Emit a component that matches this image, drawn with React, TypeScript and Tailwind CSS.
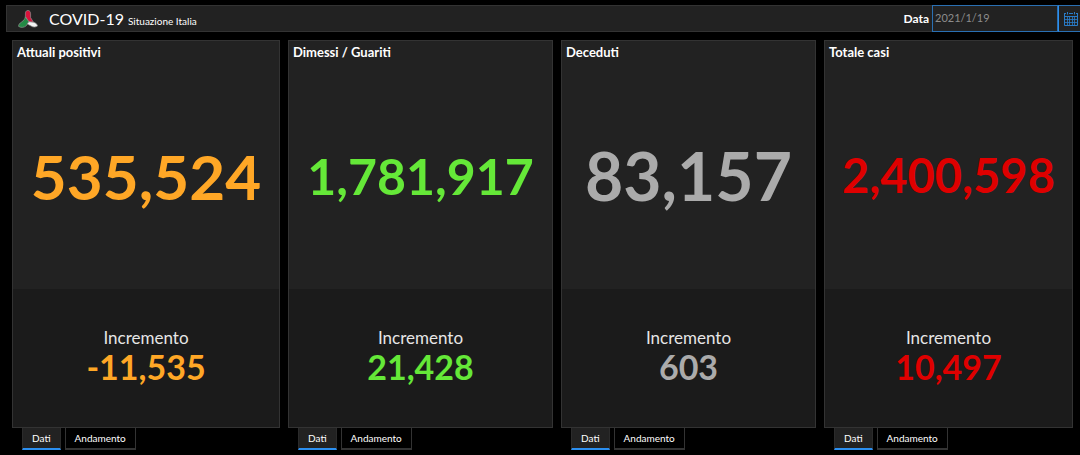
import { useState } from "react";

type Stat = {
  id: string;
  title: string;
  total: string;
  increment: string;
  color: string;
  size: string;
};

const stats: Stat[] = [
  { id: "positivi", title: "Attuali positivi", total: "535,524", increment: "-11,535", color: "text-[#ffa726]", size: "text-[62px]" },
  { id: "guariti", title: "Dimessi / Guariti", total: "1,781,917", increment: "21,428", color: "text-[#65e838]", size: "text-[50px]" },
  { id: "deceduti", title: "Deceduti", total: "83,157", increment: "603", color: "text-[#ababab]", size: "text-[66px]" },
  { id: "totale", title: "Totale casi", total: "2,400,598", increment: "10,497", color: "text-[#df0000]", size: "text-[47px]" },
];

const tabs = ["Dati", "Andamento"];

function Logo() {
  return (
    <svg viewBox="0 0 20 18" className="h-[18px] w-5" aria-hidden="true">
      <g stroke="#8f8f8f" strokeWidth="0.7" strokeLinejoin="round">
        <path d="M10 0.4C11.8 0.6 12.6 2 12.6 3.8V7.6L15.4 12.2L11 12L7.4 6.8V2.8C7.6 1.3 8.6 0.5 10 0.4Z" fill="#d9133c" />
        <path d="M7.4 6.8L10.8 11.8L8.4 15.6C6.5 17.6 3 18 0.6 16.4C0.5 14.6 1.6 13.2 3.6 12C5.6 10.6 6.8 9.4 7.4 6.8Z" fill="#238a45" />
        <path d="M10.8 11.8L15.4 12.2C17.6 12.8 19.2 14 19.5 16C17.6 17.4 15 17.3 13.2 16.1L9.4 14Z" fill="#f4f4f4" />
      </g>
    </svg>
  );
}

function CalendarIcon() {
  return (
    <svg viewBox="0 0 14 14" className="size-3.5 shrink-0" fill="none" stroke="#2a7cc7" aria-hidden="true">
      <path d="M0.5 1.5H2M5 1.5H9M12 1.5H13.5" />
      <path d="M3.5 0V2.5M10.5 0V2.5" />
      <path d="M0.5 1V13.5H13.5V1M0.5 4.5H13.5" />
      <path d="M3.5 5V13M5.5 5V13M8.5 5V13M10.5 5V13M1 7.5H13M1 10.5H13" strokeOpacity="0.8" />
    </svg>
  );
}

function StatCard({ stat }: { stat: Stat }) {
  const [active, setActive] = useState(tabs[0]);
  return (
    <section className="flex min-w-0 flex-col">
      <div className="flex flex-1 flex-col border border-[#333333]">
        <div className="flex flex-[248] flex-col bg-[#222222]">
          <h2 className="px-1 pt-px text-[13px] leading-5 font-bold text-white">{stat.title}</h2>
          <div className="flex flex-1 items-center justify-center">
            <span className={`leading-none font-bold ${stat.color} ${stat.size}`}>{stat.total}</span>
          </div>
        </div>
        <div className="flex flex-[138] flex-col items-center justify-center bg-[#1b1b1b]">
          <span className="text-[17px] leading-[22px] text-[#e6e6e6]">Incremento</span>
          <span className={`pb-1 text-[34px] leading-9 font-bold ${stat.color}`}>{stat.increment}</span>
        </div>
      </div>
      <div role="tablist" aria-label={stat.title} className="flex gap-1 pl-2.5">
        {tabs.map((tab) => (
          <button
            key={tab}
            type="button"
            role="tab"
            aria-selected={active === tab}
            onClick={() => setActive(tab)}
            className={
              active === tab
                ? "h-[22px] border-x border-b-2 border-x-[#2b2b2b] border-b-[#2b8ff0] bg-[#222222] px-[9px] text-[10px] leading-5 text-white"
                : "h-[22px] border-x border-b-2 border-[#333333] bg-black px-[9px] text-[10px] leading-5 text-white"
            }
          >
            {tab}
          </button>
        ))}
      </div>
    </section>
  );
}

export default function App() {
  const [date, setDate] = useState("2021/1/19");
  return (
    <div className="flex min-h-screen flex-col overflow-hidden bg-black pt-[5px] pb-[5px] font-['Lato','Liberation_Sans',sans-serif]">
      <header className="ml-1.5 flex h-[27px] items-stretch border-y border-l border-[#333333] bg-[#222222]">
        <div className="flex flex-1 items-center pl-[11px]">
          <Logo />
          <h1 className="flex items-baseline gap-1 pl-[11px] whitespace-nowrap">
            <span className="text-base leading-6 text-white">COVID-19</span>
            <span className="text-[10px] text-white">Situazione Italia</span>
          </h1>
        </div>
        <label htmlFor="data" className="flex items-center pr-[3px] text-xs font-bold text-white">
          Data
        </label>
        <input
          id="data"
          value={date}
          onChange={(e) => setDate(e.target.value)}
          className="-my-px w-[126px] border border-[#2a70b3] bg-[#222222] px-0.5 text-[11px] text-[#8c8c8c] outline-none"
        />
        <button
          type="button"
          aria-label="Apri calendario"
          className="-my-px flex w-[22px] items-center justify-end border-y border-l border-y-[#2a70b3] border-l-[#2b8ff0] pr-0.5"
        >
          <CalendarIcon />
        </button>
      </header>
      <main className="grid flex-1 grid-cols-[268fr_265fr_255fr_249fr] gap-2 pt-2 pr-[7px] pl-3">
        {stats.map((stat) => (
          <StatCard key={stat.id} stat={stat} />
        ))}
      </main>
    </div>
  );
}
